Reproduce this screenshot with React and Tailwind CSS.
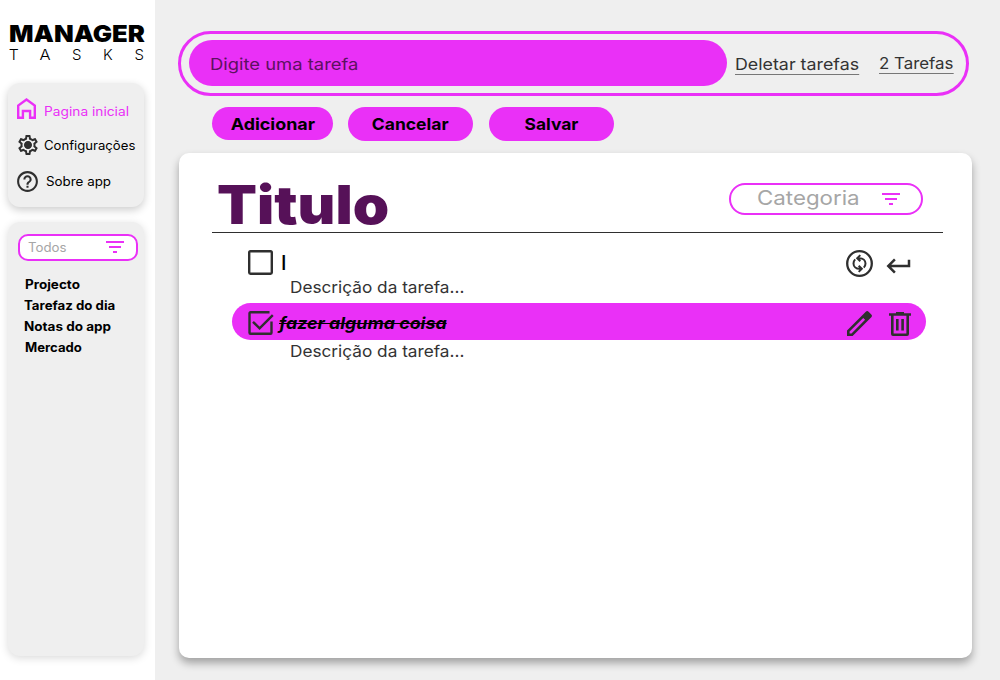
import { MdHelpOutline, MdKeyboardReturn, MdOutlineSettings } from "react-icons/md";

function Label({ className = "", children }) {
  return <span className={`block shrink-0 origin-left whitespace-nowrap ${className}`}>{children}</span>;
}

function HomeIcon() {
  return (
    <svg className="-mt-[2px] block h-[21px] w-[19px]" viewBox="0 0 19 21" fill="none" stroke="currentColor" strokeWidth="2.4">
      <path d="M1.2 19.8V7.6L9.5 1.5l8.3 6.1v12.2h-4.7v-6.8H5.9v6.8z" />
    </svg>
  );
}

function FilterIcon({ className = "" }) {
  return (
    <svg className={`block h-3 w-[18px] shrink-0 ${className}`} viewBox="0 0 18 12" fill="#ea30f7">
      <rect width="18" height="2" />
      <rect x="3" y="5" width="12" height="2" />
      <rect x="7" y="10" width="4" height="2" />
    </svg>
  );
}

function SyncCircleIcon() {
  return (
    <svg className="block size-[27px]" viewBox="0 0 27 27" fill="none" stroke="#2f2f2f">
      <circle cx="13.5" cy="13.5" r="12.3" strokeWidth="2.3" />
      <path
        d="M11.5 8.200h2c3.500 0 6 2.400 6 5.400 0 1.600-.7 3-1.700 4M15.500 18.800h-2c-3.500 0-6-2.400-6-5.400 0-1.600.7-3 1.700-4M14.300 5.100l-3.100 3.100 3.100 3.100M12.700 15.700l3.100 3.100-3.100 3.100"
        strokeWidth="2"
      />
    </svg>
  );
}

function PencilIcon() {
  return (
    <svg className="block size-[25px]" viewBox="0 0 25 25" fill="#2f2f2f">
      <path
        fillRule="evenodd"
        d="M0 19.400 18.800.7a2 2 0 0 1 2.800 0l2.700 2.700a2 2 0 0 1 0 2.800L5.600 25H0zM2.600 20.500v1.900h1.900L18.100 8.800l-1.900-1.900z"
      />
    </svg>
  );
}

function TrashIcon() {
  return (
    <svg className="block h-6 w-[22px]" viewBox="0 0 22 24" fill="#2f2f2f">
      <path fillRule="evenodd" d="M7 0h8v1.200h7v2.600h-2V22a2 2 0 0 1-2 2H4a2 2 0 0 1-2-2V3.800H0V1.200h7zM4.600 3.800v17.600h12.800V3.800z" />
      <path d="M7 7h2.600v11.600H7zM12.300 7h2.600v11.600h-2.600z" />
    </svg>
  );
}

function Checkbox({ checked }) {
  return (
    <svg className="block h-[25px] w-[27px] shrink-0" viewBox="0 0 27 25" fill="none" stroke="#2f2f2f" strokeWidth="2.4">
      {checked ? (
        <path d="M21.500 2.200H2.500a1 1 0 0 0-1 1v19.500a1 1 0 0 0 1 1h20a1 1 0 0 0 1-1V11.500M5 11.800l6.600 6.600L24.800 5.100" />
      ) : (
        <rect x="1.200" y="1.200" width="22.600" height="22.600" rx="1.300" />
      )}
    </svg>
  );
}

function Description() {
  return (
    <div className="flex h-[22px] items-center pl-[111px] text-[16.5px] text-[#333]">
      <Label className="scale-x-[1.043]">Descrição da tarefa...</Label>
    </div>
  );
}

function Sidebar() {
  return (
    <aside className="flex w-[155px] shrink-0 flex-col bg-white pt-6 pl-2">
      <div className="h-[20px] pl-px text-[23px] leading-[21px] font-black">
        <Label className="w-0 scale-x-[1.115]">MANAGER</Label>
      </div>
      <div className="mt-[3px] flex h-4 w-[136px] justify-between pl-px text-[15px] leading-4">
        <span className="scale-x-[1.05] font-light">T</span>
        <span className="scale-x-[1.1] font-light">A</span>
        <span className="font-light">S</span>
        <span className="font-light">K</span>
        <span className="font-light">S</span>
      </div>

      <nav className="mt-[20px] flex h-[124px] w-[136px] flex-col rounded-xl bg-[#efefef] pt-[14px] pl-[9px] text-[12.5px] shadow-[0_3px_8px_rgba(0,0,0,0.2)]">
        <a className="flex h-6 items-center text-[#ea30f7]">
          <HomeIcon />
          <Label className="mt-[7px] ml-[8px] scale-x-[1.1]">Pagina inicial</Label>
        </a>
        <a className="mt-3 flex h-6 items-center">
          <span className="relative -ml-[1px] block size-[24px] text-[#2f2f2f]">
            <MdOutlineSettings className="block size-[24px]" />
            <svg className="absolute inset-0 size-[24px]" viewBox="0 0 24 24" fill="currentColor">
              <circle cx="12" cy="12" r="3.400" />
            </svg>
          </span>
          <Label className="ml-[4px] scale-x-[1.05] pt-[2px]">Configurações</Label>
        </a>
        <a className="mt-[12px] flex h-6 items-center">
          <MdHelpOutline className="-ml-[2px] block size-[25px] shrink-0 text-[#2f2f2f]" />
          <Label className="ml-[6px] scale-x-[1.07] pt-[2px]">Sobre app</Label>
        </a>
      </nav>

      <section className="mt-[15px] h-[434px] w-[136px] rounded-xl bg-[#efefef] px-[10px] pt-3 shadow-[0_2px_8px_rgba(0,0,0,0.15)]">
        <div className="flex h-[27px] w-[120px] items-center justify-between rounded-[10px] border-2 border-[#ea30f7] bg-white pr-3 pl-[8px]">
          <Label className="scale-x-[1.06] pt-[2px] text-[12.5px] text-[#a6a6a6]">Todos</Label>
          <FilterIcon className="-mt-px" />
        </div>
        <ul className="mt-[13px] text-[12.5px] leading-[21px] font-bold">
          <li className="pl-[7px]"><Label className="w-0 scale-x-[1.08]">Projecto</Label></li>
          <li className="pl-[6px]"><Label className="w-0 scale-x-[1.06]">Tarefaz do dia</Label></li>
          <li className="pl-[6px]"><Label className="w-0 scale-x-[1.08]">Notas do app</Label></li>
          <li className="pl-[7px]"><Label className="w-0 scale-x-[1.05]">Mercado</Label></li>
        </ul>
      </section>
    </aside>
  );
}

export default function App() {
  return (
    <div className="flex h-[680px] w-[1000px] overflow-hidden bg-[#efefef] font-['Inter','Open_Sans',sans-serif] text-black">
      <Sidebar />
      <main className="flex flex-col pt-[31px] pl-[23px]">
        <div className="flex h-[65px] w-[791px] items-center rounded-full border-[3px] border-[#ea30f7] pb-[1px] pl-2 text-[16.5px] text-[#333]">
          <div className="flex h-[46px] w-[538px] shrink-0 items-center rounded-full bg-[#ea30f7] pt-[2px] pl-[21px] text-[#5c1160]">
            <Label className="scale-x-[1.115]">Digite uma tarefa</Label>
          </div>
          <div className="ml-2 w-[124.5px] pt-[3px]">
            <Label className="inline-block scale-x-[1.08] border-b border-[#777] leading-[19px]">Deletar tarefas</Label>
          </div>
          <div className="ml-[19.5px] pt-[1px]">
            <Label className="inline-block scale-x-[1.023] border-b border-[#777] leading-[19px]">2 Tarefas</Label>
          </div>
        </div>

        <div className="mt-[11px] flex items-start pl-[34px] text-[16.5px] font-bold">
          <button className="flex h-[33px] w-[121px] justify-center rounded-full bg-[#ea30f7] leading-[34px]">
            <span className="scale-x-[1.085]">Adicionar</span>
          </button>
          <button className="ml-[15px] flex h-[34px] w-[125px] justify-center rounded-full bg-[#ea30f7] leading-[34px]">
            <span className="scale-x-[1.06]">Cancelar</span>
          </button>
          <button className="ml-4 flex h-[34px] w-[125px] justify-center rounded-full bg-[#ea30f7] leading-[34px]">
            <span className="scale-x-[1.055]">Salvar</span>
          </button>
        </div>

        <section className="mt-3 ml-px h-[505px] w-[793px] rounded-[10px] bg-white shadow-[0_5px_9px_rgba(0,0,0,0.33)]">
          <header className="ml-[33px] flex h-[80px] w-[731px] items-start justify-between border-b border-[#2f2f2f] pr-5 pl-[5px]">
            <h1 className="mt-[26px] origin-left scale-x-[1.1] text-[53px] leading-[53px] font-black text-[#561158]">Titulo</h1>
            <div className="mt-[30px] flex h-8 w-[194px] items-center justify-between rounded-full border-2 border-[#ea30f7] pr-[21px] pl-[26px]">
              <Label className="-mt-[3px] scale-x-[1.115] text-[20px] text-[#a6a6a6]">Categoria</Label>
              <FilterIcon />
            </div>
          </header>

          <div className="mt-4 flex h-[27px] items-center pr-[58px] pl-[69px]">
            <Checkbox />
            <span className="ml-[6px] text-[20px] font-medium">I</span>
            <span className="ml-auto pt-[2px]"><SyncCircleIcon /></span>
            <MdKeyboardReturn className="mt-[6px] ml-[11px] block size-[30px] text-[#2f2f2f]" />
          </div>
          <Description />

          <div className="mt-[5px] ml-[53px] flex h-[37px] w-[694px] items-center rounded-full bg-[#ea30f7] pr-[15px] pl-4">
            <span className="pt-px"><Checkbox checked /></span>
            <Label className="ml-[4px] scale-x-[1.08] pt-[3px] text-[16.5px] font-bold italic line-through">fazer alguma coisa</Label>
            <span className="ml-auto pt-[4px]"><PencilIcon /></span>
            <span className="ml-[17px] pt-[4px]"><TrashIcon /></span>
          </div>
          <Description />
        </section>
      </main>
    </div>
  );
}
